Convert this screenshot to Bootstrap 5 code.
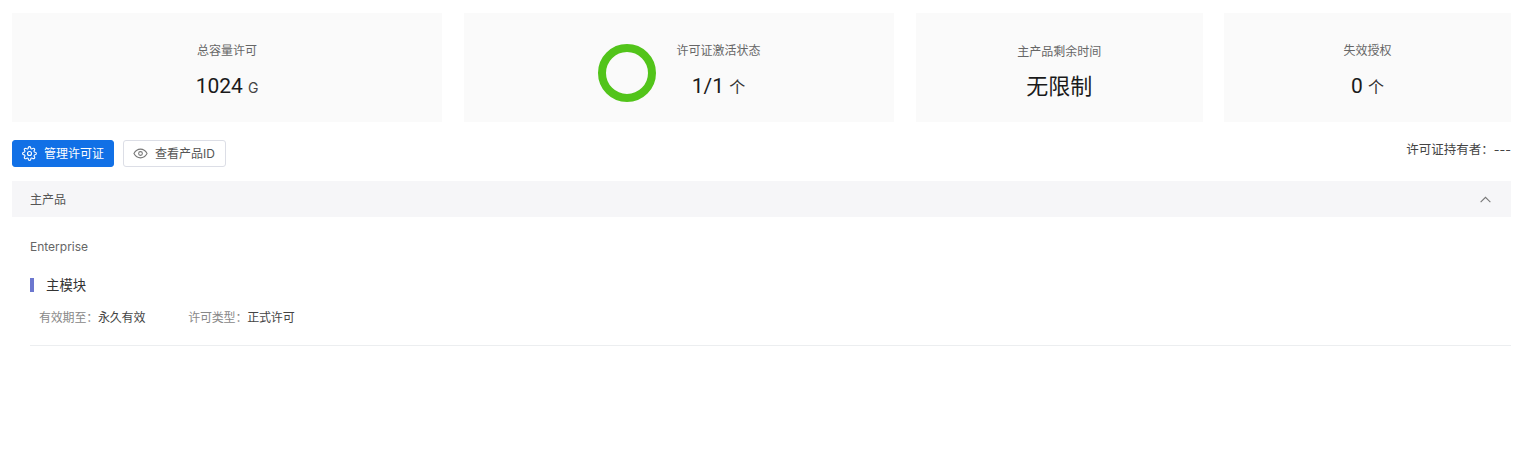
<!DOCTYPE html>
<html lang="zh-CN">
<head>
<meta charset="utf-8">
<title>许可证</title>
<link rel="stylesheet" href="https://cdn.jsdelivr.net/npm/bootstrap@5.3.0/dist/css/bootstrap.min.css">
<style>
html,body{height:100%;background:#fff}
body{font-family:Inter,"Noto Sans CJK SC",sans-serif;font-size:12px;color:#333}
.page-wrap{padding:13px 11px 0 12px}
.stat-row{gap:21.6px;height:109px}
.stat-wide{flex:3 1 0}
.stat-narrow{flex:2 1 0}
.stat-box{background:#fafafa;min-width:0}
.stat-title{font-size:12px;line-height:18px;color:#666;margin-bottom:11px}
.stat-val{font-size:22px;line-height:28px;color:#1a1a1a}
.stat-num{font-family:Roboto,sans-serif;font-size:21px}
.stat-unit{font-size:14px;color:#444}
.stat-unit-cn{font-size:16px;color:#333}
.stat-inner{padding-top:8px}
.ring-svg{width:60px;height:60px;margin-right:19px;margin-top:10px}
.tool-row{margin-top:18px;height:27px}
.btn-main,.btn-plain{height:27px;font-size:12px;line-height:1;padding:0 9px;border-radius:3px;gap:7px}
.btn-main{background:#1170e6;border:1px solid #1170e6;color:#fff}
.btn-plain{background:#fff;border:1px solid #dcdee6;color:#555;margin-left:9px;padding:0 10px 0 9px}
.btn-main:hover{background:#1170e6;color:#fff}
.btn-plain:hover{background:#fff;color:#555}
.owner{font-size:12.500px;color:#444;line-height:18px;margin-top:1px}
.prod-head{margin-top:14px;height:36px;background:#f6f6f8;padding:1px 19px 0 18px;color:#555;font-size:12px}
.prod-name{margin:21px 0 0 18px;line-height:18px;color:#666;font-size:12px}
.mod-title{margin:22px 0 0 18px;height:14px;border-left:4px solid #6c77cf;padding-left:12px;font-size:13.400px;color:#333}
.mod-meta{margin:17px 0 0 27px;line-height:18px;gap:43px;letter-spacing:-.2px}
.mod-key{color:#888}
.mod-v{color:#444}
.prod-line{margin:18px 0 0 18px;border-top:1px solid #eceef0}
</style>
</head>
<body>
<div class="page-wrap">
  <div class="d-flex stat-row">
    <div class="stat-wide stat-box d-flex align-items-center justify-content-center text-center">
      <div class="stat-inner">
        <div class="stat-title">总容量许可</div>
        <div class="stat-val"><span class="stat-num">1024 </span><span class="stat-unit">G</span></div>
      </div>
    </div>
    <div class="stat-wide stat-box d-flex align-items-center justify-content-center text-center">
      <svg class="ring-svg" viewBox="0 0 60 60" aria-hidden="true"><circle cx="30" cy="30" r="25" fill="none" stroke="#52c41a" stroke-width="8"/></svg>
      <div class="stat-inner">
        <div class="stat-title">许可证激活状态</div>
        <div class="stat-val"><span class="stat-num">1/1 </span><span class="stat-unit-cn">个</span></div>
      </div>
    </div>
    <div class="stat-narrow stat-box d-flex align-items-center justify-content-center text-center">
      <div class="stat-inner">
        <div class="stat-title">主产品剩余时间</div>
        <div class="stat-val">无限制</div>
      </div>
    </div>
    <div class="stat-narrow stat-box d-flex align-items-center justify-content-center text-center">
      <div class="stat-inner">
        <div class="stat-title">失效授权</div>
        <div class="stat-val"><span class="stat-num">0 </span><span class="stat-unit-cn">个</span></div>
      </div>
    </div>
  </div>

  <div class="d-flex justify-content-between align-items-start tool-row">
    <div class="d-flex">
      <button type="button" class="btn btn-main d-inline-flex align-items-center">
        <svg width="15" height="15" viewBox="0 0 24 24" fill="none" stroke="currentColor" stroke-width="1.800" stroke-linejoin="round" aria-hidden="true"><circle cx="12" cy="12" r="3.200"/><path d="M19.400 15a1.650 1.650 0 0 0 .33 1.820l.06.06a2 2 0 0 1 0 2.830 2 2 0 0 1-2.830 0l-.06-.06a1.650 1.650 0 0 0-1.820-.33 1.650 1.650 0 0 0-1 1.510V21a2 2 0 0 1-2 2 2 2 0 0 1-2-2v-.09A1.650 1.650 0 0 0 9 19.400a1.650 1.650 0 0 0-1.820.33l-.06.06a2 2 0 0 1-2.830 0 2 2 0 0 1 0-2.830l.06-.06a1.650 1.650 0 0 0 .33-1.820 1.650 1.650 0 0 0-1.510-1H3a2 2 0 0 1-2-2 2 2 0 0 1 2-2h.09A1.650 1.650 0 0 0 4.600 9a1.650 1.650 0 0 0-.33-1.820l-.06-.06a2 2 0 0 1 0-2.830 2 2 0 0 1 2.830 0l.06.06a1.650 1.650 0 0 0 1.820.33H9a1.650 1.650 0 0 0 1-1.510V3a2 2 0 0 1 2-2 2 2 0 0 1 2 2v.09a1.650 1.650 0 0 0 1 1.510 1.650 1.650 0 0 0 1.820-.33l.06-.06a2 2 0 0 1 2.830 0 2 2 0 0 1 0 2.830l-.06.06a1.650 1.650 0 0 0-.33 1.820V9a1.650 1.650 0 0 0 1.510 1H21a2 2 0 0 1 2 2 2 2 0 0 1-2 2h-.09a1.650 1.650 0 0 0-1.510 1z"/></svg>
        <span>管理许可证</span>
      </button>
      <button type="button" class="btn btn-plain d-inline-flex align-items-center">
        <svg width="15" height="15" viewBox="0 0 24 24" fill="none" stroke="#777" stroke-width="1.700" aria-hidden="true"><path d="M1.500 12C4 7.500 7.700 5 12 5s8 2.500 10.500 7C20 16.500 16.300 19 12 19s-8-2.500-10.500-7z"/><circle cx="12" cy="12" r="3"/></svg>
        <span>查看产品ID</span>
      </button>
    </div>
    <div class="owner">许可证持有者：---</div>
  </div>

  <div class="d-flex justify-content-between align-items-center prod-head">
    <span>主产品</span>
    <svg width="13" height="13" viewBox="0 0 12 12" fill="none" stroke="#777" stroke-width="1" aria-hidden="true"><path d="M1.500 8.500l4.500-4.500 4.500 4.500"/></svg>
  </div>
  <div class="prod-name">Enterprise</div>
  <div class="mod-title d-flex align-items-center">主模块</div>
  <div class="d-flex mod-meta">
    <div><span class="mod-key">有效期至：</span><span class="mod-v">永久有效</span></div>
    <div><span class="mod-key">许可类型：</span><span class="mod-v">正式许可</span></div>
  </div>
  <div class="prod-line"></div>
</div>
</body>
</html>
